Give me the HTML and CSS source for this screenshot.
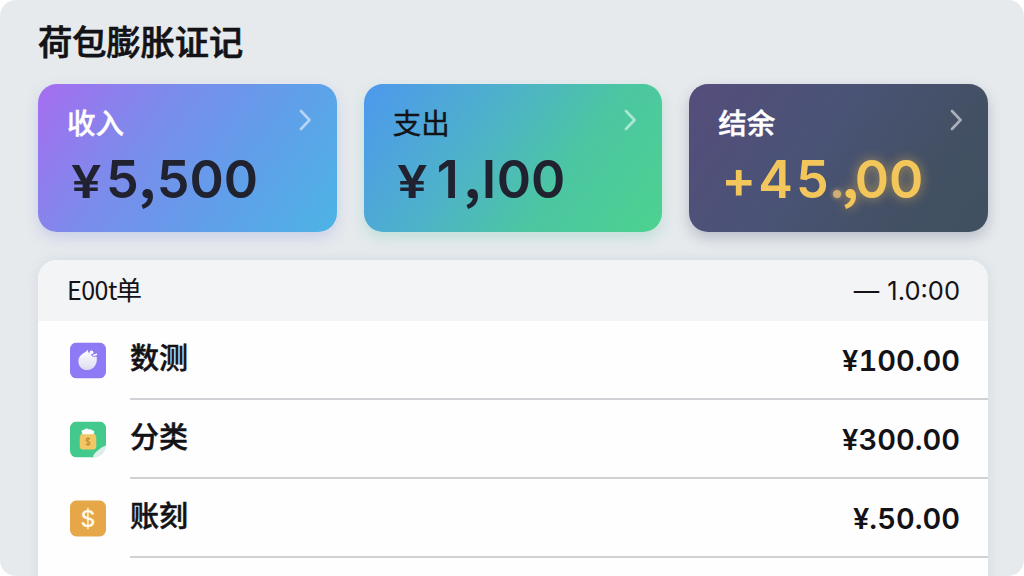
FILE: index.html
```html
<!DOCTYPE html>
<html lang="zh-CN">
<head>
    <meta charset="UTF-8">
    <meta name="viewport" content="width=device-width, initial-scale=1.0">
    <title>荷包膨胀证记</title>
    <link rel="stylesheet" href="styles.css">
</head>
<body>
    <div class="app">
        <h1>荷包膨胀证记</h1>
        <div class="cards">
            <div class="card income">
                <div class="card-top">
                    <span class="label">收入</span>
                    <svg class="chevron" viewBox="0 0 12 22"><path d="M2 2l8.5 9L2 20"/></svg>
                </div>
                <div class="value"><span class="yen">¥</span>5<span class="comma">,</span>500</div>
            </div>
            <div class="card expense">
                <div class="card-top">
                    <span class="label">支出</span>
                    <svg class="chevron" viewBox="0 0 12 22"><path d="M2 2l8.5 9L2 20"/></svg>
                </div>
                <div class="value"><span class="yen">¥</span><span class="one">1</span><span class="comma">,</span><span class="bar">I</span>00</div>
            </div>
            <div class="card balance">
                <div class="card-top">
                    <span class="label">结余</span>
                    <svg class="chevron" viewBox="0 0 12 22"><path d="M2 2l8.5 9L2 20"/></svg>
                </div>
                <div class="value"><span class="plus">+</span><span class="lead">45</span><span class="dot">.</span><span class="tail"><span class="comma">,</span>00</span></div>
            </div>
        </div>
        <div class="list">
            <div class="list-header">
                <span class="list-title"><span class="code">E00t</span>单</span>
                <span class="list-total"><span class="dash">—</span>1.0:00</span>
            </div>
            <div class="row">
                <svg class="icon" viewBox="0 0 36 36">
                    <defs>
                        <linearGradient id="ball" x1="0" y1="0" x2="0" y2="1">
                            <stop offset="0" stop-color="#fff"/>
                            <stop offset="1" stop-color="#dcdcf2"/>
                        </linearGradient>
                    </defs>
                    <rect width="36" height="36" rx="6.5" fill="#8f7af6"/>
                    <path d="M18.200 7c-.6 2 0 3.200 1.500 3.800 1.400.6 1.500 2 2.400 2.900 1.100 1 2.700.8 4.400.1 1.700 6.700-2.300 13.700-9 13.700-5.300 0-9.100-3.600-9.100-8.600 0-4.800 3.200-7.200 5.900-8.700 1.400-.8 2.700-2 3.900-3.200z" fill="url(#ball)"/>
                    <circle cx="21.500" cy="9.800" r="1.900" fill="#fff"/>
                    <path d="M23.500 13l3-1.200" stroke="#fff" stroke-width="1.500" stroke-linecap="round"/>
                </svg>
                <div class="row-body">
                    <span class="name">数测</span>
                    <span class="amount">¥100.00</span>
                </div>
            </div>
            <div class="row">
                <svg class="icon" viewBox="0 0 36 36">
                    <path d="M6.500 0h23A6.500 6.500 0 0 1 36 6.500V24L24 36H6.500A6.500 6.500 0 0 1 0 29.500v-23A6.500 6.500 0 0 1 6.500 0z" fill="#43c98b"/>
                    <path d="M36 25c-1 6.500-5 10.500-11.500 11-1.500 0-1.800-1.500-.8-2.700 2.800-3.800 6.800-7 11-8.800.8-.4 1.400-.2 1.300.5z" fill="#dcefea"/>
                    <path d="M12 12h12c1.600 1.200 2.300 3 2.300 5v7.500c0 2.400-1.200 3.500-3.500 3.500h-9.600c-2.300 0-3.500-1.100-3.500-3.500V17c0-2 .7-3.800 2.300-5z" fill="#f2c765"/>
                    <path d="M11.500 9.500c1-1.500 2.500-.8 3.300-1.800 1-1.100 3-.7 4 .2 1.200-.5 2.500.2 3.200.9 1.300.1 2.200.7 2.300 1.700l-.8 2.300h-11z" fill="#fff"/>
                    <path d="M20 17.600c-1-1.100-4-1-4 .8 0 2 4 1.300 4 3.300 0 1.800-3 1.900-4.200.7M18 15.500v9" fill="none" stroke="#c58a31" stroke-width="1.100"/>
                </svg>
                <div class="row-body">
                    <span class="name">分类</span>
                    <span class="amount">¥300.00</span>
                </div>
            </div>
            <div class="row">
                <div class="icon coin">$</div>
                <div class="row-body">
                    <span class="name">账刻</span>
                    <span class="amount">¥.50.00</span>
                </div>
            </div>
        </div>
    </div>
</body>
</html>
```
FILE: styles.css
```css
* {
    box-sizing: border-box;
}
body {
    margin: 0;
    background: #fff;
    color: #131317;
    font-family: Inter, "Noto Sans CJK SC", sans-serif;
}
.app {
    height: 576px;
    padding: 18px 36px 0 38px;
    border-radius: 16px;
    background: #e6eaed;
    overflow: hidden;
}
h1 {
    height: 50px;
    margin: 0 0 16px;
    font-size: 34.2px;
    font-weight: 500;
    line-height: 50px;
    -webkit-text-stroke: 0.7px;
}
.cards {
    display: grid;
    grid-template-columns: repeat(3, 1fr);
    gap: 27px;
}
.card {
    height: 148px;
    padding: 20px 26px 0 29px;
    border-radius: 19px;
}
.card-top {
    display: flex;
    justify-content: space-between;
}
.label {
    font-size: 28.5px;
    font-weight: 500;
    line-height: 40px;
    -webkit-text-stroke: 0.4px;
}
.chevron {
    width: 12px;
    height: 22px;
    margin-top: 5px;
    fill: none;
    stroke: rgba(255, 255, 255, 0.55);
    stroke-width: 2.6;
    stroke-linecap: round;
    stroke-linejoin: round;
}
.value {
    display: flex;
    align-items: baseline;
    height: 70px;
    color: #20222f;
    font-size: 52px;
    font-weight: 600;
    line-height: 72px;
}
.yen {
    width: 28px;
    margin: 0 7px 0 4px;
    font-size: 45px;
    transform: scaleX(1.2);
    transform-origin: left;
}
.comma {
    width: 18px;
    font-family: "Noto Sans CJK SC", sans-serif;
    font-weight: 700;
    line-height: 1;
}
.one {
    width: 32px;
    padding-left: 5px;
}
.bar {
    width: 15px;
}
.income {
    background: linear-gradient(125deg, #a66df0 0%, #7b8ceb 35%, #619eea 65%, #4cb4e4 100%);
    box-shadow: 0 6px 14px rgba(120, 130, 225, 0.25);
}
.income .label {
    color: #fff;
}
.expense {
    background: linear-gradient(125deg, #4d98ee 0%, #4eb2c9 38%, #4bc6a2 65%, #4dd28f 100%);
    box-shadow: 0 6px 14px rgba(80, 190, 160, 0.25);
}
.expense .label {
    font-weight: 400;
}
.balance {
    background: linear-gradient(125deg, #554d7c 0%, #4a5376 40%, #435064 75%, #405060 100%);
    box-shadow: 0 6px 14px rgba(70, 80, 110, 0.28);
}
.balance .label {
    color: #fff;
}
.balance .value {
    color: #f3c65b;
}
.plus {
    width: 40px;
    padding-left: 3px;
}
.lead {
    letter-spacing: 3px;
}
.dot {
    width: 13px;
    margin-left: -3px;
    color: #d0ae78;
    text-shadow: 0 0 5px #c8a568;
}
.tail {
    display: flex;
    align-items: baseline;
    text-shadow: 0 0 12px rgba(243, 190, 80, 0.6);
}
.tail .comma {
    width: 13px;
}
.list {
    height: 330px;
    margin-top: 28px;
    border-radius: 19px 19px 0 0;
    background: #fefefe;
    box-shadow: 0 0 12px rgba(120, 135, 155, 0.16);
    overflow: hidden;
}
.list-header {
    display: flex;
    justify-content: space-between;
    height: 61px;
    padding: 0 28px 0 29px;
    background: #f3f4f6;
    font-size: 26px;
    line-height: 61px;
}
.list-title {
    font-family: "Noto Sans CJK SC", sans-serif;
    line-height: 58px;
}
.code {
    margin-right: -1px;
    font-size: 25px;
    letter-spacing: -0.5px;
}
.list-total {
    font-size: 25.5px;
}
.dash {
    margin-right: 8px;
}
.row {
    display: flex;
    align-items: center;
    height: 79px;
    padding-left: 32px;
}
.icon {
    flex: none;
    width: 36px;
    height: 36px;
    margin-right: 24px;
    transform: translateY(-0.5px);
}
.coin {
    border-radius: 6.5px;
    background: #e5a748;
    color: #fff8e8;
    font-size: 23px;
    font-weight: 500;
    line-height: 36px;
    text-align: center;
}
.row-body {
    display: flex;
    flex: 1;
    align-items: center;
    justify-content: space-between;
    height: 79px;
    padding: 1px 28px 0 0;
    border-bottom: 2px solid #cfd1d4;
}
.name {
    font-size: 29px;
    font-weight: 500;
    line-height: 40px;
    margin-top: -3px;
    -webkit-text-stroke: 0.5px;
}
.amount {
    font-size: 29px;
    font-weight: 600;
    font-variant-numeric: tabular-nums;
}
```
